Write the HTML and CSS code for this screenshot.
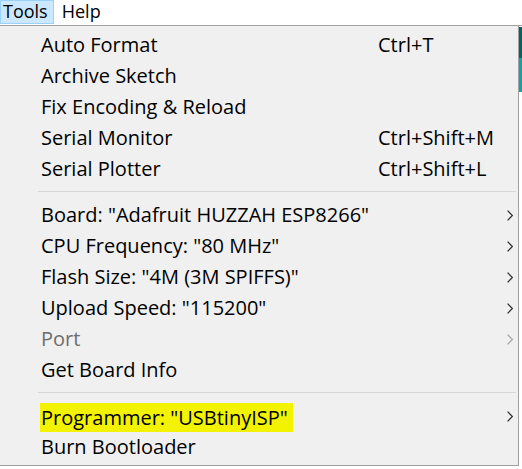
FILE: index.html
```html
<!DOCTYPE html>
<html>
<head>
<meta charset="utf-8">
<link rel="stylesheet" href="styles.css">
</head>
<body>
<div class="menubar">
  <span class="mb-item active">Tools</span>
  <span class="mb-item">Help</span>
</div>
<div class="app">
  <div class="toolbar"></div>
  <div class="tabs"></div>
  <div class="editor"></div>
</div>
<div class="menu">
  <div class="item"><span class="label">Auto Format</span><span class="key">Ctrl+T</span></div>
  <div class="item"><span class="label">Archive Sketch</span></div>
  <div class="item"><span class="label">Fix Encoding &amp; Reload</span></div>
  <div class="item"><span class="label">Serial Monitor</span><span class="key">Ctrl+Shift+M</span></div>
  <div class="item"><span class="label">Serial Plotter</span><span class="key">Ctrl+Shift+L</span></div>
  <div class="sep"></div>
  <div class="item"><span class="label">Board: "Adafruit HUZZAH ESP8266"</span><svg class="chev" width="6" height="11" viewBox="0 0 6 11"><path d="M0.6 0.6 L5.4 5.5 L0.6 10.4"/></svg></div>
  <div class="item"><span class="label">CPU Frequency: "80 MHz"</span><svg class="chev" width="6" height="11" viewBox="0 0 6 11"><path d="M0.6 0.6 L5.4 5.5 L0.6 10.4"/></svg></div>
  <div class="item"><span class="label">Flash Size: "4M (3M SPIFFS)"</span><svg class="chev" width="6" height="11" viewBox="0 0 6 11"><path d="M0.6 0.6 L5.4 5.5 L0.6 10.4"/></svg></div>
  <div class="item"><span class="label">Upload Speed: "115200"</span><svg class="chev" width="6" height="11" viewBox="0 0 6 11"><path d="M0.6 0.6 L5.4 5.5 L0.6 10.4"/></svg></div>
  <div class="item disabled"><span class="label">Port</span><svg class="chev" width="6" height="11" viewBox="0 0 6 11"><path d="M0.6 0.6 L5.4 5.5 L0.6 10.4"/></svg></div>
  <div class="item"><span class="label">Get Board Info</span></div>
  <div class="sep"></div>
  <div class="item"><span class="label"><span class="hl">Programmer: "USBtinyISP"</span></span><svg class="chev" width="6" height="11" viewBox="0 0 6 11"><path d="M0.6 0.6 L5.4 5.5 L0.6 10.4"/></svg></div>
  <div class="item"><span class="label">Burn Bootloader</span></div>
</div>
</body>
</html>
```
FILE: styles.css
```css
html, body {
  margin: 0;
  padding: 0;
  background: #ffffff;
}
body {
  width: 522px;
  height: 469px;
  overflow: hidden;
  position: relative;
  font-family: "Open Sans", "Noto Sans", sans-serif;
  color: #000;
}
.menubar {
  display: flex;
  align-items: flex-start;
  border-bottom: 1px solid #a0a0a0;
  box-sizing: border-box;
  height: 26px;
  font-size: 18px;
}
.mb-item {
  height: 24px;
  line-height: 20px;
  padding: 0 5px 0 2px;
  box-sizing: border-box;
  border: 1px solid transparent;
}
.mb-item + .mb-item {
  margin-left: 5px;
}
.mb-item.active {
  background: #cce8ff;
  border-color: #99d1ff;
}
.app {
  display: flex;
  flex-direction: column;
}
.toolbar {
  margin-top: 1px;
  height: 31px;
  background: #006468;
}
.tabs {
  height: 34px;
  background: #17a1a5;
}
.editor {
  height: 380px;
  background: #fff;
}
.menu {
  position: absolute;
  left: -1px;
  top: 25px;
  width: 518px;
  background: #f0f0f0;
  border: 1px solid #a0a0a0;
  padding: 4px 0 2px;
  font-size: 20px;
}
.item {
  display: grid;
  grid-template-columns: 337px 1fr 6px;
  align-items: start;
  height: 31px;
  padding: 0 5px 0 41px;
}
.label, .key {
  line-height: 30px;
  white-space: nowrap;
}
.label {
  grid-column: 1;
}
.key {
  grid-column: 2;
}
.chev {
  grid-column: 3;
  align-self: center;
}
.chev path {
  fill: none;
  stroke: #333;
  stroke-width: 1.3;
}
.disabled .label {
  color: #6d6d6d;
}
.disabled .chev path {
  stroke: #a6a6a6;
}
.sep {
  height: 1px;
  background: #d7d7d7;
  margin: 6px 2px 8px 38px;
}
.hl {
  display: inline-block;
  background: #f3f300;
  height: 29px;
  line-height: 29px;
  margin-left: -1px;
  padding: 0 5px 0 1px;
  vertical-align: top;
  margin-top: 2px;
}
```
